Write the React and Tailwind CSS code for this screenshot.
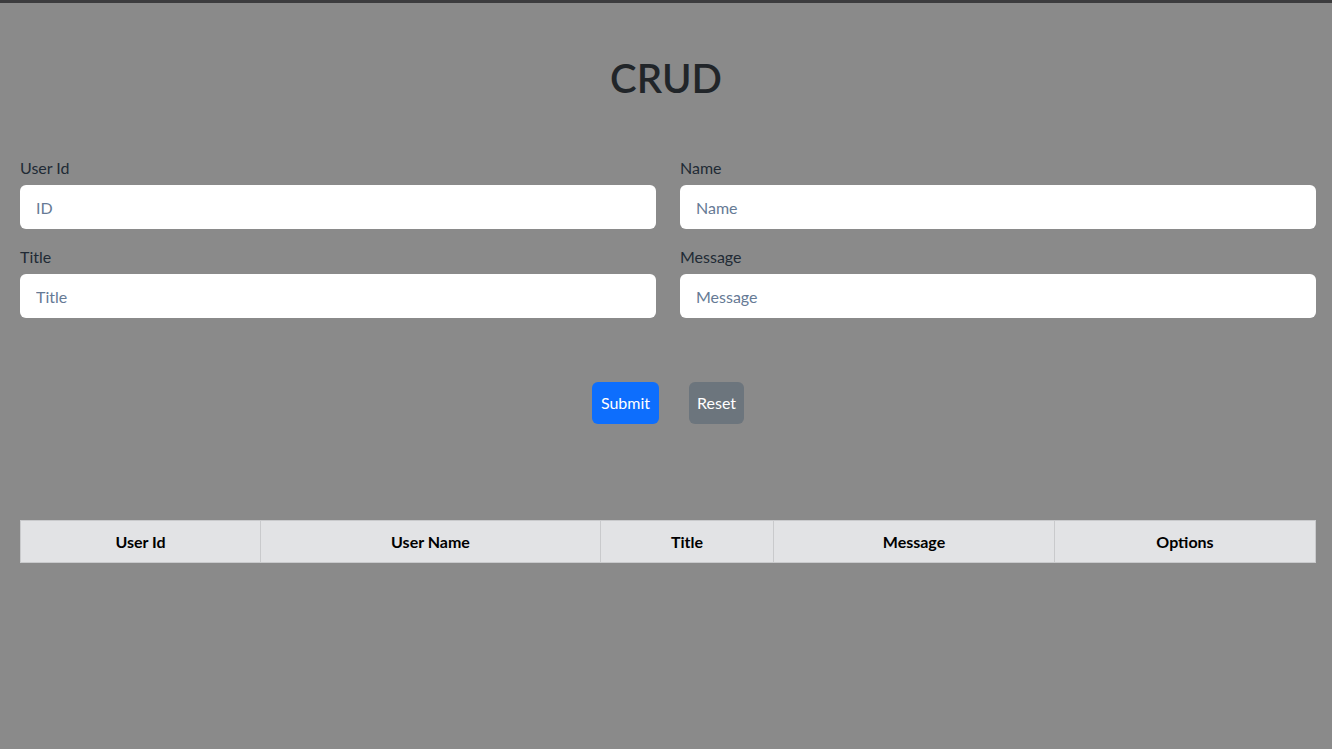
import React, { useState } from 'react';

const Field = ({ label, placeholder, value, onChange }) => (
  <div className="flex flex-col">
    <label className="text-[16px] leading-6 text-[#212a35] mb-[5px]">{label}</label>
    <input
      type="text"
      value={value}
      onChange={onChange}
      placeholder={placeholder}
      className="h-[44px] w-full rounded-[6px] bg-white px-4 text-[16px] text-[#212529] outline-none placeholder:text-[#667a95]"
    />
  </div>
);

const App = () => {
  const [form, setForm] = useState({ id: '', name: '', title: '', message: '' });

  const update = (key) => (e) => setForm({ ...form, [key]: e.target.value });

  const handleReset = () => setForm({ id: '', name: '', title: '', message: '' });

  return (
    <div
      className="h-screen overflow-hidden bg-[#8a8a8a] border-t-[3px] border-[#3c3c3e]"
      style={{ fontFamily: '"Segoe UI", Lato, "Noto Sans", sans-serif' }}
    >
      <h1 className="pt-[51px] text-center text-[40px] leading-[48px] font-semibold text-[#212529]">CRUD</h1>

      <div className="ml-5 mr-4">
        <div className="mt-[54px] grid grid-cols-2 gap-x-6 gap-y-4">
          <Field label="User Id" placeholder="ID" value={form.id} onChange={update('id')} />
          <Field label="Name" placeholder="Name" value={form.name} onChange={update('name')} />
          <Field label="Title" placeholder="Title" value={form.title} onChange={update('title')} />
          <Field label="Message" placeholder="Message" value={form.message} onChange={update('message')} />
        </div>

        <div className="mt-16 flex justify-center gap-[30px]">
          <button className="h-[42px] rounded-[6px] bg-[#0d6efd] px-[9px] text-[16px] text-white">Submit</button>
          <button onClick={handleReset} className="h-[42px] rounded-[6px] bg-[#6c757d] px-[8px] text-[16px] text-white">Reset</button>
        </div>

        <table className="mt-24 w-full border-collapse table-fixed">
          <thead>
            <tr className="bg-[#e2e3e5] text-[16px] font-bold text-black">
              <th className="w-[240px] h-[42px] border border-[#c9cacc]">User Id</th>
              <th className="w-[340px] h-[42px] border border-[#c9cacc]">User Name</th>
              <th className="w-[173px] h-[42px] border border-[#c9cacc]">Title</th>
              <th className="w-[281px] h-[42px] border border-[#c9cacc]">Message</th>
              <th className="h-[42px] border border-[#c9cacc]">Options</th>
            </tr>
          </thead>
          <tbody></tbody>
        </table>
      </div>
    </div>
  );
};

export default App;
